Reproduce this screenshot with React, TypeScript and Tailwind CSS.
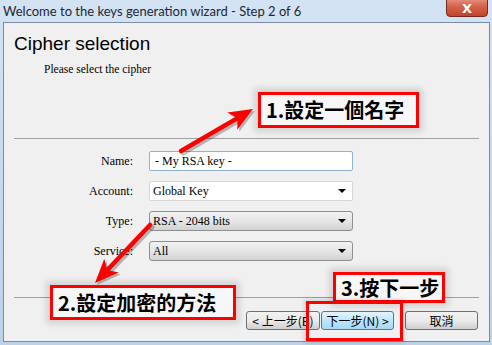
import React from 'react'

const cjk = { fontFamily: '"Noto Sans CJK TC", "Noto Sans", sans-serif' }
const serif = { fontFamily: '"Liberation Serif", "Noto Sans CJK TC", serif' }

function Arrow({ x1, y1, x2, y2 }: { x1: number; y1: number; x2: number; y2: number }) {
  const dx = x2 - x1
  const dy = y2 - y1
  const len = Math.hypot(dx, dy)
  const ux = dx / len
  const uy = dy / len
  const head = 24
  const bx = x2 - ux * head
  const by = y2 - uy * head
  const px = -uy
  const py = ux
  const pts = `${x2},${y2} ${bx + px * 10},${by + py * 10} ${bx + ux * 6},${by + uy * 6} ${bx - px * 10},${by - py * 10}`
  return (
    <g>
      <g transform="translate(2,2)" opacity="0.25">
        <line x1={x1} y1={y1} x2={bx + ux * 6} y2={by + uy * 6} stroke="#000" strokeWidth="5" strokeLinecap="round" />
        <polygon points={pts} fill="#000" />
      </g>
      <line x1={x1} y1={y1} x2={bx + ux * 6} y2={by + uy * 6} stroke="#ff0000" strokeWidth="4.5" strokeLinecap="round" />
      <polygon points={pts} fill="#ff0000" />
    </g>
  )
}

function Callout({ text, className }: { text: string; className: string }) {
  return (
    <div
      className={`absolute flex items-center border-[3px] border-[#ff0000] bg-[#f7f7f7] pl-[5px] text-black font-bold shadow-[0_0_6px_4px_rgba(0,0,0,0.12)] ${className}`}
      style={cjk}
    >
      {text}
    </div>
  )
}

function Combo({ value, flat }: { value: string; flat?: boolean }) {
  return (
    <div
      className={`flex h-[20px] w-[204px] items-center justify-between pl-[3px] pr-[6px] text-[12px] text-black ${
        flat
          ? 'rounded-[2px] border border-[#d6d6d6] bg-white'
          : 'rounded-[3px] border border-[#8e8f8f] bg-gradient-to-b from-[#f2f2f2] via-[#e6e6e6] to-[#d2d2d2]'
      }`}
      style={serif}
    >
      <span>{value}</span>
      <span className="h-0 w-0 border-x-[4px] border-t-[4px] border-x-transparent border-t-black" />
    </div>
  )
}

export default function App() {
  const rows = [
    { label: 'Name:', el: (
      <div className="flex h-[20px] w-[204px] items-center rounded-[2px] border border-[#8fb1d6] bg-white pl-[5px] text-[12px] text-black" style={serif}>
        - My RSA key -
      </div>
    ) },
    { label: 'Account:', el: <Combo value="Global Key" flat /> },
    { label: 'Type:', el: <Combo value="RSA - 2048 bits" /> },
    { label: 'Service:', el: <Combo value="All" /> },
  ]

  return (
    <div className="relative h-[345px] w-[492px] overflow-hidden bg-gradient-to-b from-[#d3e3f3] via-[#c6daef] to-[#bcd2ea]">
      {/* title bar */}
      <div className="flex h-[22px] items-center justify-between">
        <span className="pl-[3px] text-[13px] leading-none text-[#1e2733]" style={{ fontFamily: 'Lato, "Noto Sans", sans-serif' }}>
          Welcome to the keys generation wizard - Step 2 of 6
        </span>
        <div className="mr-[4px] -mt-[10px] flex h-[22px] w-[42px] items-end justify-center rounded-b-[4px] border border-[#7a2a20] bg-gradient-to-b from-[#e8a493] via-[#d4654d] to-[#c2432b] pb-[1px] text-[13px] font-bold leading-none text-white" style={{ fontFamily: '"DejaVu Sans", sans-serif' }}>
          X
        </div>
      </div>

      {/* wizard panel */}
      <div className="ml-[3px] mr-[2px] flex h-[320px] flex-col border border-[#7c8ba0] bg-[#f0f0f0]">
        <h1 className="mt-[12px] pl-[10px] text-[19px] leading-[18px] text-black" style={{ fontFamily: '"Liberation Sans", Arial, sans-serif' }}>
          Cipher selection
        </h1>
        <p className="mt-[9px] pl-[40px] text-[11.5px] leading-[14px] text-black" style={serif}>
          Please select the cipher
        </p>
        <div className="mx-[10px] mt-[62px] h-px bg-[#a0a0a0]" />

        <div className="mt-[12px] flex flex-col gap-[10px]">
          {rows.map((r) => (
            <div key={r.label} className="flex items-center">
              <span className="w-[130px] pr-px text-right text-[12px] text-black" style={serif}>
                {r.label}
              </span>
              <div className="ml-[15px]">{r.el}</div>
            </div>
          ))}
        </div>

        <div className="mx-[10px] mt-[36px] h-px bg-[#a0a0a0]" />

        <div className="mt-[13px] flex items-center pl-[242px] text-[12px]" style={cjk}>
          <div className="flex h-[19px] w-[74px] items-center justify-center rounded-[3px] border border-[#707070] bg-gradient-to-b from-[#f2f2f2] via-[#ebebeb] to-[#cfcfcf] leading-none text-black">
            &lt; 上一步(B)
          </div>
          <div className="ml-px flex h-[19px] w-[73px] items-center justify-center rounded-[3px] border border-[#3c7fb1] bg-gradient-to-b from-[#e3f4fc] via-[#bee6fd] to-[#a7d9f5] leading-none text-black">
            下一步(N) &gt;
          </div>
          <div className="ml-[11px] flex h-[19px] w-[73px] items-center justify-center rounded-[3px] border border-[#707070] bg-gradient-to-b from-[#f2f2f2] via-[#ebebeb] to-[#cfcfcf] leading-none text-black">
            取消
          </div>
        </div>
      </div>

      {/* annotations */}
      <svg className="absolute left-0 top-0" width="492" height="345">
        <Arrow x1={181} y1={151} x2={253} y2={109} />
        <Arrow x1={150} y1={225} x2={95} y2={283} />
      </svg>
      <Callout text="1.設定一個名字" className="left-[258px] top-[92px] h-[36px] w-[161px] text-[20px]" />
      <Callout text="2.設定加密的方法" className="left-[50px] top-[285px] h-[35px] w-[186px] text-[20px]" />
      <Callout text="3.按下一步" className="left-[333px] top-[272px] h-[31px] w-[112px] text-[20px]" />
      <div className="absolute left-[306px] top-[301px] h-[40px] w-[97px] border-[3px] border-[#ff0000] shadow-[0_0_4px_2px_rgba(0,0,0,0.12)]" />
    </div>
  )
}
